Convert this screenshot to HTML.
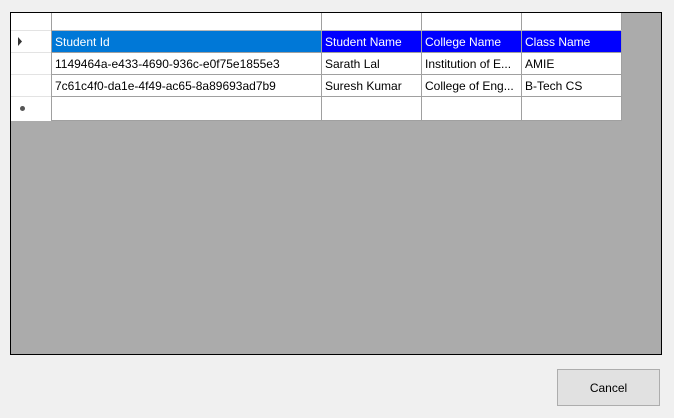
<!DOCTYPE html>
<html><head><style>
body{margin:0;width:674px;height:418px;background:#f0f0f0;position:relative;overflow:hidden;font-family:"Liberation Sans",sans-serif;font-size:12px;}
.a{position:absolute;box-sizing:border-box;}
.c{position:absolute;box-sizing:border-box;background:#fff;line-height:22px;padding-left:3px;white-space:nowrap;overflow:hidden;color:#000;}
</style></head><body>
<div class="a" style="left:10px;top:12px;width:652px;height:343px;border:1px solid #000;background:#ababab"></div>
<div class="a" style="left:11px;top:13px;width:611px;height:108px;background:#a0a0a0"></div>
<div class="a" style="left:11px;top:13px;width:40px;height:108px;background:#fff"></div>
<div class="a" style="left:11px;top:30px;width:40px;height:1px;background:#e3e3e3"></div>
<div class="a" style="left:11px;top:52px;width:40px;height:1px;background:#e3e3e3"></div>
<div class="a" style="left:11px;top:74px;width:40px;height:1px;background:#e3e3e3"></div>
<div class="a" style="left:11px;top:96px;width:40px;height:1px;background:#e3e3e3"></div>
<div class="c" style="left:52px;top:13px;width:269px;height:17px"></div>
<div class="c" style="left:322px;top:13px;width:99px;height:17px"></div>
<div class="c" style="left:422px;top:13px;width:99px;height:17px"></div>
<div class="c" style="left:522px;top:13px;width:99px;height:17px"></div>
<div class="a" style="left:52px;top:30px;width:570px;height:1px;background:#b8b8b8"></div>
<div class="c" style="left:52px;top:31px;width:269px;height:21px;background:#0078d7;color:#fff">Student Id</div>
<div class="c" style="left:322px;top:31px;width:99px;height:21px;background:#0000ff;color:#fff">Student Name</div>
<div class="c" style="left:422px;top:31px;width:99px;height:21px;background:#0000ff;color:#fff">College Name</div>
<div class="c" style="left:522px;top:31px;width:99px;height:21px;background:#0000ff;color:#fff">Class Name</div>
<div class="c" style="left:52px;top:53px;width:269px;height:21px">1149464a-e433-4690-936c-e0f75e1855e3</div>
<div class="c" style="left:322px;top:53px;width:99px;height:21px">Sarath Lal</div>
<div class="c" style="left:422px;top:53px;width:99px;height:21px">Institution of E...</div>
<div class="c" style="left:522px;top:53px;width:99px;height:21px">AMIE</div>
<div class="c" style="left:52px;top:75px;width:269px;height:21px">7c61c4f0-da1e-4f49-ac65-8a89693ad7b9</div>
<div class="c" style="left:322px;top:75px;width:99px;height:21px">Suresh Kumar</div>
<div class="c" style="left:422px;top:75px;width:99px;height:21px">College of Eng...</div>
<div class="c" style="left:522px;top:75px;width:99px;height:21px">B-Tech CS</div>
<div class="c" style="left:52px;top:97px;width:269px;height:23px"></div>
<div class="c" style="left:322px;top:97px;width:99px;height:23px"></div>
<div class="c" style="left:422px;top:97px;width:99px;height:23px"></div>
<div class="c" style="left:522px;top:97px;width:99px;height:23px"></div>
<svg class="a" style="left:15px;top:35px" width="8" height="14"><path d="M3 2 L7 6.5 L3 11 Z" fill="#333"/></svg>
<div class="a" style="left:20px;top:106px;width:5px;height:5px;border-radius:2.5px;background:#555"></div>
<div class="a" style="left:557px;top:369px;width:103px;height:37px;border:1px solid #adadad;background:#e1e1e1;text-align:center;line-height:36px;color:#000">Cancel</div>
</body></html>
